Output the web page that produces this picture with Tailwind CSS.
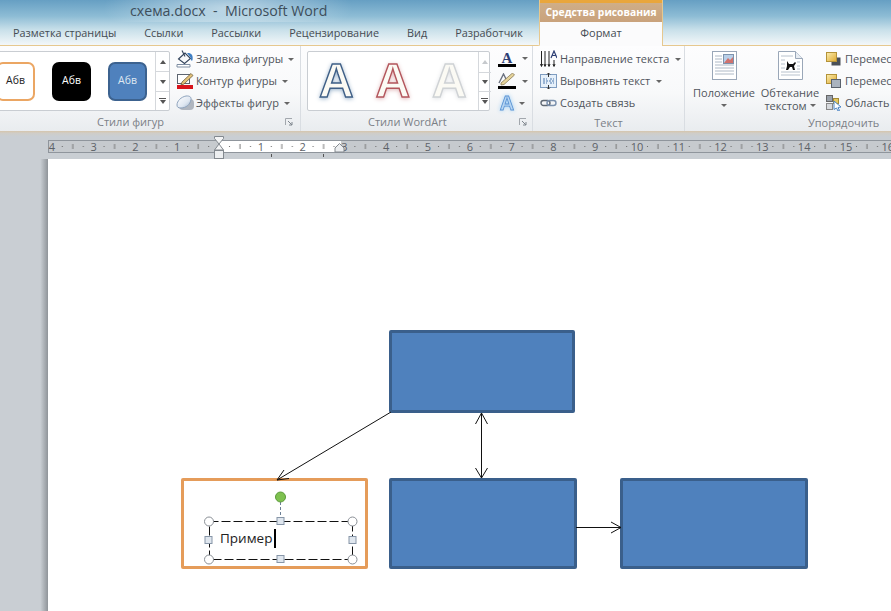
<!DOCTYPE html>
<html lang="ru">
<head>
<meta charset="utf-8">
<script src="https://cdn.jsdelivr.net/npm/@tailwindcss/browser@4"></script>
</head>
<body class="w-[891px] h-[611px] overflow-hidden bg-white font-['Open_Sans',sans-serif] text-[11px] text-[#50555c]">

<svg width="0" height="0" class="absolute">
  <defs>
    <linearGradient id="pillow" x1="0" y1="0" x2="1" y2="1"><stop offset="0" stop-color="#ffffff"/><stop offset="0.6" stop-color="#dfe7f1"/><stop offset="1" stop-color="#9fb3cc"/></linearGradient>
    <linearGradient id="gold" x1="0" y1="0" x2="1" y2="1"><stop offset="0" stop-color="#fbeeb0"/><stop offset="1" stop-color="#e0a92f"/></linearGradient>
  </defs>
</svg>

<!-- Title + tabs -->
<header class="flex h-[46px] bg-[linear-gradient(180deg,#669fc3_0%,#8dbcd5_35%,#c9e0ea_65%,#f6f9fa_100%)]">
  <div class="w-[540px] flex flex-col border-b border-r border-[#e6c88f] rounded-br-[2px]">
    <div class="h-[22px] pl-[130px] flex items-center bg-[radial-gradient(ellipse_125px_34px_at_228px_8px,rgba(255,255,255,0.5),transparent)]">
      <span class="whitespace-pre text-[14.2px] leading-[20px] text-[#3d4e5b]">схема.docx  -  Microsoft Word</span>
    </div>
    <nav class="flex-1 flex items-center pl-[13px] gap-[28px] text-[10.85px] text-[#454b52] pb-[1px]">
      <span>Разметка страницы</span>
      <span>Ссылки</span>
      <span>Рассылки</span>
      <span>Рецензирование</span>
      <span>Вид</span>
      <span>Разработчик</span>
    </nav>
  </div>
  <div class="w-[122px] flex flex-col">
    <div class="h-[22px] border-t-[3px] border-[#e9a63c] bg-[linear-gradient(180deg,#cfae88,#c9a27c)] flex items-center justify-center text-white font-bold text-[10.3px]">Средства рисования</div>
    <div class="flex-1 bg-[#fbfbfc] flex items-center justify-center text-[#454b52] pb-[1px]">Формат</div>
  </div>
  <div class="flex-1 border-b border-l border-[#e6c88f]"></div>
</header>

<!-- Ribbon -->
<section class="h-[85px] flex bg-[linear-gradient(180deg,#fdfdfe_0%,#f8f9fa_55%,#e9ecef_100%)]">

  <!-- Стили фигур -->
  <div class="w-[301px] shrink-0 flex flex-col border-r border-[#d9dde2]">
    <div class="flex h-[69px] pt-[5px]">
      <div class="w-[171px] h-[60px] -ml-px shrink-0 flex bg-white border border-[#c9cdd2] rounded-r-[2px]">
        <div class="flex-1 flex items-center pl-0 gap-[17px] -ml-[4px]">
          <div class="w-[39px] h-[39px] shrink-0 rounded-[7px] bg-white border-2 border-[#eba663] flex items-center justify-center text-[#222] text-[10.5px]">Абв</div>
          <div class="w-[39px] h-[39px] shrink-0 rounded-[7px] bg-black flex items-center justify-center text-white text-[10.5px]">Абв</div>
          <div class="w-[39px] h-[39px] shrink-0 rounded-[7px] bg-[#4f81bd] border-2 border-[#3c628f] flex items-center justify-center text-[#dfe8f2] text-[10.5px]">Абв</div>
        </div>
        <div class="w-[14px] shrink-0 flex flex-col border-l border-[#d5d8dc]">
          <div class="h-[20px] flex items-center justify-center border-b border-[#d5d8dc]"><i class="border-x-[3px] border-b-[4px] border-x-transparent border-b-[#555]"></i></div>
          <div class="h-[20px] flex items-center justify-center border-b border-[#d5d8dc]"><i class="border-x-[3px] border-t-[4px] border-x-transparent border-t-[#555]"></i></div>
          <div class="flex-1 flex flex-col items-center justify-center gap-[1px]"><i class="w-[7px] h-px bg-[#555]"></i><i class="border-x-[3px] border-t-[4px] border-x-transparent border-t-[#555]"></i></div>
        </div>
      </div>
      <div class="pl-[6px] flex flex-col gap-[4px] -mt-[1px]">
        <div class="h-[18px] flex items-center gap-[2px] whitespace-nowrap">
          <svg width="18" height="18" viewBox="0 0 18 18"><path d="M1 14.500h13v2.500H1z" fill="#fff" stroke="#7f8ea3"/><path d="M2.500 9l6.500-6 5.500 5.500-6 5z" fill="#f7f8fa" stroke="#33445c" stroke-width="1.100"/><path d="M6 .5l3 6" stroke="#33445c" stroke-width="1.100"/><path d="M11 3c4-.5 6.500 2 5.500 7-.3 1-1 1-1.500 0l-.5-2.500z" fill="#3f7fc4"/></svg>
          <span>Заливка фигуры</span><i class="ml-[3px] border-x-[3px] border-t-[3px] border-x-transparent border-t-[#666]"></i>
        </div>
        <div class="h-[18px] flex items-center gap-[2px] whitespace-nowrap">
          <svg width="18" height="18" viewBox="0 0 18 18"><rect x="1.500" y="2.500" width="12" height="9" fill="#fff" stroke="#5d6570"/><path d="M6 10l9-8.500 2 2-9 8.500-3 1z" fill="#e3c27a" stroke="#6b5a3a" stroke-width=".8"/><rect x="1" y="13" width="16" height="4" fill="#d8141c"/></svg>
          <span>Контур фигуры</span><i class="ml-[3px] border-x-[3px] border-t-[3px] border-x-transparent border-t-[#666]"></i>
        </div>
        <div class="h-[18px] flex items-center gap-[2px] whitespace-nowrap">
          <svg width="18" height="18" viewBox="0 0 18 18"><rect x="3" y="5" width="15" height="11" rx="4" fill="#b0b6bf"/><path d="M1 11C1 7 5 3 10 2c3.500-.3 5.500 1 5 3.500-.8 5-5 8.500-10 8.500-3 0-4-1-4-3z" fill="url(#pillow)" stroke="#8ea3bd"/></svg>
          <span>Эффекты фигур</span><i class="ml-[3px] border-x-[3px] border-t-[3px] border-x-transparent border-t-[#666]"></i>
        </div>
      </div>
    </div>
    <div class="flex-1 flex items-center justify-between text-[#7b8087] pl-[97px] pr-[7px] pb-[1px]">
      <span>Стили фигур</span>
      <svg width="8" height="8" viewBox="0 0 8 8"><path d="M.5 7V.5H7" fill="none" stroke="#a2a7ad"/><path d="M3 3l4 4M7 4v3H4" fill="none" stroke="#7e858d"/></svg>
    </div>
  </div>

  <!-- Стили WordArt -->
  <div class="w-[232px] shrink-0 flex flex-col border-r border-[#d9dde2]">
    <div class="flex h-[69px] pt-[5px] pl-[6px]">
      <div class="w-[183px] h-[60px] shrink-0 flex bg-white border border-[#c9cdd2] rounded-[2px]">
        <div class="flex-1 flex items-center font-['Liberation_Sans',sans-serif] font-bold text-[48px] leading-none text-[#fbfaf4]">
          <span class="w-[56.500px] shrink-0 text-center [-webkit-text-stroke:1.400px_#3f5f86] drop-shadow-[0_1px_2px_#9bb4cc]">A</span>
          <span class="w-[56.500px] shrink-0 text-center [-webkit-text-stroke:1.400px_#b3565c] drop-shadow-[0_1px_2px_#e2b8ba]">A</span>
          <span class="w-[56.500px] shrink-0 text-center [-webkit-text-stroke:1.400px_#cfd2d5] drop-shadow-[0_1px_2px_#e1e3e6]">A</span>
        </div>
        <div class="w-[13px] shrink-0 flex flex-col border-l border-[#d5d8dc]">
          <div class="h-[20px] flex items-center justify-center"><i class="border-x-[3px] border-b-[4px] border-x-transparent border-b-[#c6c9cd]"></i></div>
          <div class="h-[20px] flex items-center justify-center border-y border-[#d5d8dc]"><i class="border-x-[3px] border-t-[4px] border-x-transparent border-t-[#555]"></i></div>
          <div class="flex-1 flex flex-col items-center justify-center gap-[1px]"><i class="w-[7px] h-px bg-[#555]"></i><i class="border-x-[3px] border-t-[4px] border-x-transparent border-t-[#555]"></i></div>
        </div>
      </div>
      <div class="pl-[8px] flex flex-col gap-[6px] pt-[1px]">
        <div class="h-[15px] flex items-start gap-[6px]">
          <span class="w-[18px] h-[15px] flex justify-center font-['Liberation_Serif',serif] font-bold text-[#2e3f75] text-[15px] leading-[12px] border-b-[3px] border-black">A</span>
          <i class="mt-[5px] border-x-[3px] border-t-[3px] border-x-transparent border-t-[#666]"></i>
        </div>
        <div class="h-[16px] flex items-center gap-[6px]">
          <svg width="18" height="16" viewBox="0 0 18 16"><path d="M1 10L5.500 1l3.500 7" fill="none" stroke="#6b7280" stroke-width="1.400"/><path d="M3 10L14.500 0l2 2L6 11.500l-3 .5z" fill="#e5d39a" stroke="#786a45" stroke-width=".7"/><rect x="0" y="13" width="18" height="3" fill="#000"/></svg>
          <i class="border-x-[3px] border-t-[3px] border-x-transparent border-t-[#666]"></i>
        </div>
        <div class="h-[16px] flex items-center gap-[3px]">
          <span class="w-[18px] flex justify-center font-['Liberation_Sans',sans-serif] font-bold text-[20px] leading-[16px] text-[#b7d6f3] [-webkit-text-stroke:0.800px_#5b93d3] drop-shadow-[0_0_2px_#9fd0f5]">A</span>
          <i class="border-x-[3px] border-t-[3px] border-x-transparent border-t-[#666]"></i>
        </div>
      </div>
    </div>
    <div class="flex-1 flex items-center justify-between text-[#7b8087] pl-[67px] pr-[5px] pb-[1px]">
      <span>Стили WordArt</span>
      <svg width="8" height="8" viewBox="0 0 8 8"><path d="M.5 7V.5H7" fill="none" stroke="#a2a7ad"/><path d="M3 3l4 4M7 4v3H4" fill="none" stroke="#7e858d"/></svg>
    </div>
  </div>

  <!-- Текст -->
  <div class="w-[152px] shrink-0 flex flex-col border-r border-[#d9dde2]">
    <div class="h-[69px] pl-[7px] pt-[4px] flex flex-col gap-[4px]">
      <div class="h-[18px] flex items-center gap-[3px] whitespace-nowrap">
        <svg width="17" height="18" viewBox="0 0 17 18"><path d="M1.500 1v15M5 1v15M9 1v15M14 10v6" stroke="#222" fill="none"/><path d="M.500 14l1 2.500 1-2.500M4 14l1 2.500 1-2.500M8 14l1 2.500 1-2.500M13 14l1 2.500 1-2.500" stroke="#222" fill="none"/><path d="M11 8l3-7 3 7M12.300 5.500h3.400" stroke="#2e3f75" fill="none" stroke-width="1.200"/></svg>
        <span>Направление текста</span><i class="ml-[3px] border-x-[3px] border-t-[3px] border-x-transparent border-t-[#666]"></i>
      </div>
      <div class="h-[18px] flex items-center gap-[3px] whitespace-nowrap">
        <svg width="17" height="18" viewBox="0 0 17 18"><rect x=".5" y="2.500" width="16" height="13" fill="#e6f0fa" stroke="#7f9dc1"/><path d="M3 7h4M10 7h4M3 9h11M3 11h4M10 11h4" stroke="#4d78ad" stroke-dasharray="2 1"/><path d="M8.500 1v4M8.500 13v4M7 2.500L8.500 1 10 2.500M7 15.500L8.500 17 10 15.500" stroke="#333" fill="none"/></svg>
        <span>Выровнять текст</span><i class="ml-[3px] border-x-[3px] border-t-[3px] border-x-transparent border-t-[#666]"></i>
      </div>
      <div class="h-[18px] flex items-center gap-[3px] whitespace-nowrap">
        <svg width="17" height="18" viewBox="0 0 17 18"><rect x="1" y="6.500" width="9" height="5" rx="2.500" fill="none" stroke="#5f6873" stroke-width="1.400"/><rect x="7" y="6.500" width="9" height="5" rx="2.500" fill="none" stroke="#7a90ad" stroke-width="1.400"/></svg>
        <span>Создать связь</span>
      </div>
    </div>
    <div class="flex-1 flex items-center justify-center text-[#7b8087]">Текст</div>
  </div>

  <!-- Упорядочить -->
  <div class="flex-1 min-w-0 flex flex-col overflow-hidden">
    <div class="h-[69px] flex">
      <div class="w-[72px] shrink-0 flex flex-col items-center pt-[5px] ml-[3px]">
        <svg width="25" height="29" viewBox="0 0 25 29"><rect x=".5" y=".5" width="24" height="28" fill="#fff" stroke="#9aa7b8"/><path d="M3 5h7M3 8h7M3 11h7M3 14h19M3 17h19M3 20h19M3 23h19" stroke="#aeb9c6"/><rect x="11.500" y="3.500" width="10" height="9" fill="#b9cfe8" stroke="#7e93ad"/><path d="M12 12l4-5 2 2 3-3v6z" fill="#d0726e"/></svg>
        <span class="mt-[6px] leading-[14px]">Положение</span>
        <i class="mt-[4px] border-x-[3px] border-t-[3px] border-x-transparent border-t-[#666]"></i>
      </div>
      <div class="w-[60px] shrink-0 flex flex-col items-center pt-[5px]">
        <svg width="25" height="29" viewBox="0 0 25 29"><path d="M.5.500h17l7 7v21H.500z" fill="#fff" stroke="#9aa7b8"/><path d="M17.500.500v7h7" fill="#e8edf3" stroke="#9aa7b8"/><path d="M3 5h12M3 9h4M3 13h4M3 17h4M3 21h19M3 24h19M19 11h3M19 15h3M19 18h3" stroke="#b8c2cd"/><path d="M9 10l2 3h4l2-2 1 1-2 3 1 4h-2l-1-3h-2l-2 3H8l1-4z" fill="#111"/></svg>
        <span class="mt-[6px] leading-[13px]">Обтекание</span>
        <span class="leading-[13px] flex items-center gap-[3px]">текстом<i class="border-x-[3px] border-t-[3px] border-x-transparent border-t-[#666]"></i></span>
      </div>
      <div class="pl-[6px] pt-[4px] flex flex-col gap-[4px] whitespace-nowrap">
        <div class="h-[18px] flex items-center gap-[3px]">
          <svg width="16" height="16" viewBox="0 0 16 16"><rect x="5.500" y="6.500" width="9" height="8" fill="#4a5058"/><rect x=".5" y="1.500" width="10" height="9" fill="url(#gold)" stroke="#b49339"/></svg>
          <span>Перемес</span>
        </div>
        <div class="h-[18px] flex items-center gap-[3px]">
          <svg width="16" height="16" viewBox="0 0 16 16"><rect x=".5" y="1.500" width="10" height="9" fill="url(#gold)" stroke="#b49339"/><rect x="5.500" y="6.500" width="9" height="8" fill="#aab3bf" stroke="#59616c"/></svg>
          <span>Перемес</span>
        </div>
        <div class="h-[18px] flex items-center gap-[3px]">
          <svg width="16" height="16" viewBox="0 0 16 16"><rect x=".5" y=".5" width="6" height="6" fill="#9aa1aa" stroke="#666"/><rect x="7.500" y="3.500" width="5" height="5" fill="#e7c95f" stroke="#a58a35"/><rect x=".5" y="8.500" width="6" height="6" fill="#d7dade" stroke="#888"/><path d="M8 6l7 6-3 .5 1.500 3-1.500.5-1.500-3L8 14.500z" fill="#fff" stroke="#4d85c4"/></svg>
          <span>Область</span>
        </div>
      </div>
    </div>
    <div class="flex-1 flex items-center pl-[123px] text-[#7b8087]">Упорядочить</div>
  </div>
</section>

<!-- Ruler band -->
<div class="h-[28px] flex bg-[linear-gradient(180deg,#d6c5ac_0%,#cfcdc8_8%,#c9ced3_20%,#c9ced3_100%)] pt-[9px] pl-[48px] overflow-hidden">
  <div class="relative w-[860px] shrink-0 h-[13px] border border-[#8f959c] bg-[#c6cace]">
    <div class="absolute left-[170px] top-0 bottom-0 w-[122px] bg-white"></div>
    <div class="absolute inset-0 flex text-[11px] leading-[11px] text-[#5c6167] -ml-[18.100px]">
      <span class="w-[41.800px] shrink-0 text-center">4</span><span class="w-[41.800px] shrink-0 text-center">3</span><span class="w-[41.800px] shrink-0 text-center">2</span><span class="w-[41.800px] shrink-0 text-center">1</span><span class="w-[41.800px] shrink-0 text-center"></span><span class="w-[41.800px] shrink-0 text-center">1</span><span class="w-[41.800px] shrink-0 text-center">2</span><span class="w-[41.800px] shrink-0 text-center">3</span><span class="w-[41.800px] shrink-0 text-center">4</span><span class="w-[41.800px] shrink-0 text-center">5</span><span class="w-[41.800px] shrink-0 text-center">6</span><span class="w-[41.800px] shrink-0 text-center">7</span><span class="w-[41.800px] shrink-0 text-center">8</span><span class="w-[41.800px] shrink-0 text-center">9</span><span class="w-[41.800px] shrink-0 text-center">10</span><span class="w-[41.800px] shrink-0 text-center">11</span><span class="w-[41.800px] shrink-0 text-center">12</span><span class="w-[41.800px] shrink-0 text-center">13</span><span class="w-[41.800px] shrink-0 text-center">14</span><span class="w-[41.800px] shrink-0 text-center">15</span><span class="w-[41.800px] shrink-0 text-center">16</span>
    </div>
    <svg class="absolute inset-0" width="858" height="11">
      <defs>
        <pattern id="t" x="2.800" y="0" width="41.800" height="11" patternUnits="userSpaceOnUse">
          <rect x="10" y="5" width="1" height="1" fill="#666"/><rect x="20.500" y="3" width="1" height="5" fill="#777"/><rect x="31" y="5" width="1" height="1" fill="#666"/>
        </pattern>
      </defs>
      <rect width="858" height="11" fill="url(#t)"/>
    </svg>
    <!-- indent markers -->
    <svg class="absolute left-[164px] -top-[5px]" width="12" height="24" viewBox="0 0 12 24"><path d="M1.500.500h9v2L6 8 1.500 2.500z" fill="#f3f4f5" stroke="#83898f"/><path d="M6 8l4.500 6H1.500z" fill="#f3f4f5" stroke="#83898f"/><rect x="1.500" y="14.500" width="9" height="8" fill="#eceef0" stroke="#83898f"/></svg>
    <svg class="absolute left-[285px] top-[2px]" width="11" height="10" viewBox="0 0 11 10"><path d="M5.500.500L10 5v4H1V5z" fill="#eceef0" stroke="#83898f"/></svg>
    <i class="absolute left-[222px] top-[13px] w-px h-[3px] bg-[#555]"></i>
    <i class="absolute left-[274px] top-[13px] w-px h-[3px] bg-[#555]"></i>
  </div>
</div>

<!-- Document -->
<main class="h-[452px] flex bg-[#c9ced3]">
  <div class="w-[48px] shrink-0 bg-[linear-gradient(90deg,#c9ced3_0%,#c9ced3_84%,#8f9499_100%)]"></div>
  <div class="relative flex-1 bg-white">
    <!-- Free canvas: coordinates relative to page at (48,159) -->
    <div class="absolute left-[341px] top-[171px] w-[186px] h-[83px] bg-[#4f81bd] border-[3px] border-[#3a5f8b] rounded-[2px]"></div>
    <div class="absolute left-[341px] top-[319px] w-[188px] h-[91px] bg-[#4f81bd] border-[3px] border-[#3a5f8b] rounded-[2px]"></div>
    <div class="absolute left-[572px] top-[319px] w-[188px] h-[91px] bg-[#4f81bd] border-[3px] border-[#3a5f8b] rounded-[2px]"></div>
    <div class="absolute left-[133px] top-[319px] w-[187px] h-[91px] bg-white border-[3px] border-[#e59c5a] rounded-[2px]"></div>

    <svg class="absolute left-0 top-0" width="843" height="452" viewBox="48 159 843 452" fill="none">
      <g stroke="#111" stroke-width="1">
        <path d="M391 412L277 480M289 478.500L277 480L284 470"/>
        <path d="M481.500 413V478M475.500 424L481.500 413L487.500 424M475.500 468L481.500 478L487.500 468"/>
        <path d="M576 527.500H621M611 522L621 527.500L611 533"/>
      </g>
      <path d="M280.500 502V518" stroke="#6b7f95" stroke-dasharray="3 2"/>
      <rect x="209.500" y="521.500" width="143" height="38" stroke="#111" stroke-dasharray="9 3"/>
      <circle cx="280.500" cy="497" r="5" fill="#7ec14f" stroke="#5b9a3a"/>
      <g fill="#fff" stroke="#8a8f96">
        <circle cx="209" cy="521.500" r="4.500"/><circle cx="352.500" cy="521.500" r="4.500"/>
        <circle cx="209" cy="559.500" r="4.500"/><circle cx="352.500" cy="559.500" r="4.500"/>
      </g>
      <g fill="#dfe6ee" stroke="#8796a8">
        <rect x="277" y="517.500" width="7" height="7"/><rect x="205" y="536.500" width="7" height="7"/>
        <rect x="349" y="536.500" width="7" height="7"/><rect x="277" y="555.500" width="7" height="7"/>
      </g>
    </svg>
    <div class="absolute left-[172px] top-[369px] h-[20px] flex items-center text-[13.500px] text-[#222]">Пример<i class="ml-[2px] w-[2px] h-[19px] bg-black"></i></div>
  </div>
</main>
</body>
</html>
